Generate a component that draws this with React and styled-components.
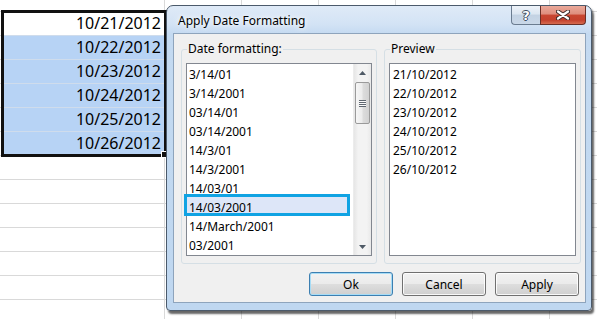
import styled, { createGlobalStyle } from "styled-components";

const GlobalStyle = createGlobalStyle`
  html, body {
    margin: 0;
    padding: 0;
    background: #fff;
    overflow: hidden;
  }
  body {
    width: 597px;
    height: 319px;
    font-family: "Noto Sans", sans-serif;
  }
`;

const dates = ["10/21/2012", "10/22/2012", "10/23/2012", "10/24/2012", "10/25/2012", "10/26/2012"];
const formats = [
  "3/14/01",
  "3/14/2001",
  "03/14/01",
  "03/14/2001",
  "14/3/01",
  "14/3/2001",
  "14/03/01",
  "14/03/2001",
  "14/March/2001",
  "03/2001",
];
const previews = ["21/10/2012", "22/10/2012", "23/10/2012", "24/10/2012", "25/10/2012", "26/10/2012"];
const ROWS = 14;
const EXTRA_COLS = 6;

function App() {
  const rows = [];
  for (let r = 0; r < ROWS; r++) {
    const value = r >= 1 && r <= 6 ? dates[r - 1] : null;
    rows.push(
      <Cell key={`e${r}`} />,
      <Cell key={`a${r}`} $selected={r >= 2 && r <= 6} $inRange={r >= 1 && r <= 6}>
        {value}
      </Cell>
    );
    for (let c = 0; c < EXTRA_COLS; c++) rows.push(<Cell key={`${r}-${c}`} />);
  }

  return (
    <Page>
      <GlobalStyle />
      <Sheet>
        {rows}
        <SelectionFrame />
      </Sheet>

      <Dialog>
        <TitleBar>
          <Title>Apply Date Formatting</Title>
          <CaptionButtons>
            <HelpButton>?</HelpButton>
            <CloseButton>
              <svg width="14" height="10" viewBox="0 0 14 10">
                <path d="M2 1.5 L12 8.5 M12 1.5 L2 8.5" stroke="#3b2a28" strokeWidth="4.2" strokeLinecap="round" />
                <path d="M2 1.5 L12 8.5 M12 1.5 L2 8.5" stroke="#fff" strokeWidth="2.2" strokeLinecap="round" />
              </svg>
            </CloseButton>
          </CaptionButtons>
        </TitleBar>

        <Client>
          <Groups>
            <Group>
              <Legend>Date formatting:</Legend>
              <ListBox>
                <Items>
                  {formats.map((f, i) => (
                    <Item key={f} $highlight={i === 7}>
                      {f}
                    </Item>
                  ))}
                </Items>
                <ScrollBar>
                  <ArrowBox>
                    <svg width="7" height="4" viewBox="0 0 7 4">
                      <path d="M3.5 0 L7 4 L0 4 Z" fill="#4f5a66" />
                    </svg>
                  </ArrowBox>
                  <Thumb>
                    <Grip />
                  </Thumb>
                  <Track />
                  <ArrowBox>
                    <svg width="7" height="4" viewBox="0 0 7 4">
                      <path d="M0 0 L7 0 L3.5 4 Z" fill="#4f5a66" />
                    </svg>
                  </ArrowBox>
                </ScrollBar>
              </ListBox>
            </Group>

            <Group>
              <Legend>Preview</Legend>
              <ListBox>
                <Items $inset={3}>
                  {previews.map((p) => (
                    <Item key={p}>{p}</Item>
                  ))}
                </Items>
              </ListBox>
            </Group>
          </Groups>

          <ButtonRow>
            <Button $default>Ok</Button>
            <Button>Cancel</Button>
            <Button>Apply</Button>
          </ButtonRow>
        </Client>
      </Dialog>
    </Page>
  );
}

const Page = styled.div`
  position: relative;
  width: 597px;
  height: 319px;
  overflow: hidden;
`;

/* spreadsheet behind the dialog */
const Sheet = styled.div`
  position: relative;
  display: grid;
  grid-template-columns: 3px 162px repeat(6, 77px);
  grid-auto-rows: 24px;
  margin-top: -12px;
`;

const Cell = styled.div`
  box-sizing: border-box;
  border-right: 1px solid #d9d9d9;
  border-bottom: 1px solid ${(p) => (p.$inRange ? "#cfdcec" : "#d9d9d9")};
  background: ${(p) => (p.$selected ? "#b7d3f5" : "#fff")};
  font-family: "Noto Sans", sans-serif;
  font-size: 16px;
  line-height: 23px;
  text-align: right;
  padding-right: 3px;
  color: #000;
  white-space: nowrap;
`;

/* thick outline of the selected range, drawn over the cells */
const SelectionFrame = styled.div`
  position: absolute;
  left: 1px;
  top: 22px;
  width: 166px;
  height: 147px;
  box-sizing: border-box;
  border: 3px solid #111;

  &::after {
    content: "";
    position: absolute;
    right: -3px;
    bottom: -3px;
    width: 5px;
    height: 5px;
    background: #111;
    outline: 1px solid #fff;
  }
`;

/* the dialog window floats over the sheet */
const Dialog = styled.div`
  position: absolute;
  left: 166px;
  top: 5px;
  width: 426px;
  height: 306px;
  box-sizing: border-box;
  display: flex;
  flex-direction: column;
  border: 1px solid #4b5a6b;
  border-radius: 7px 7px 4px 4px;
  background: linear-gradient(180deg, #dfeaf7 0px, #d3e3f5 18px, #c4daf1 28px, #bfd7f0 100%);
  box-shadow: 2px 3px 2px rgba(0, 0, 0, 0.6);
  font-family: "Noto Sans", sans-serif;
  font-size: 12px;
  color: #000;
`;

const TitleBar = styled.div`
  height: 27px;
  display: flex;
  align-items: flex-start;
  padding: 0 5px 0 11px;
`;

const Title = styled.div`
  margin-top: 7px;
  line-height: 16px;
  text-shadow: 0 0 8px #fff, 0 0 4px #fff;
`;

const CaptionButtons = styled.div`
  margin-left: auto;
  display: flex;
`;

const CaptionButton = styled.div`
  height: 19px;
  box-sizing: border-box;
  display: flex;
  align-items: center;
  justify-content: center;
  border: 1px solid #6b7c90;
  border-top: none;
`;

const HelpButton = styled(CaptionButton)`
  width: 29px;
  border-right: none;
  border-radius: 0 0 0 4px;
  background: linear-gradient(180deg, #eef3f9 0%, #dce6f1 45%, #c3d2e3 50%, #cad8e8 100%);
  color: #fff;
  font-family: "DejaVu Sans", sans-serif;
  font-weight: bold;
  font-size: 13px;
  line-height: 1;
  text-shadow: 1px 0 0 #3d4d60, -1px 0 0 #3d4d60, 0 1px 0 #3d4d60, 0 -1px 0 #3d4d60;
`;

const CloseButton = styled(CaptionButton)`
  width: 46px;
  border-color: #6a2f26;
  border-radius: 0 0 4px 0;
  background: linear-gradient(180deg, #eaa99a 0%, #de8d7d 45%, #c84631 50%, #c4412d 78%, #d66b4f 100%);
`;

const Client = styled.div`
  flex: 1;
  margin: 0 5px 7px 6px;
  box-sizing: border-box;
  border: 1px solid #8ea4bc;
  background: #f0f0f0;
  padding: 7px 4px 6px 7px;
  display: flex;
  flex-direction: column;
`;

const Groups = styled.div`
  display: grid;
  grid-template-columns: 196px 197px;
  column-gap: 7px;
`;

const Group = styled.fieldset`
  margin: 0;
  min-width: 0;
  height: 223px;
  box-sizing: border-box;
  padding: 6px 4px 7px;
  border: 1px solid #d5dfe5;
  border-radius: 3px;
  display: flex;
  flex-direction: column;
`;

const Legend = styled.legend`
  padding: 0 1px;
  margin-left: 1px;
  line-height: 16px;
  font-size: 12px;
`;

const ListBox = styled.div`
  flex: 1;
  display: flex;
  border: 1px solid #828790;
  background: #fff;
`;

const Items = styled.div`
  flex: 1;
  padding: 1px 0 0 ${(p) => p.$inset ?? 2}px;
`;

const Item = styled.div`
  position: relative;
  z-index: 0;
  height: 19px;
  line-height: 19px;
  white-space: nowrap;

  ${(p) =>
    p.$highlight &&
    `
    &::before {
      content: "";
      position: absolute;
      z-index: -1;
      left: -5px;
      right: 3px;
      top: -4px;
      bottom: 1px;
      border: 3px solid #10a3e3;
      background: #dde6f8;
    }
  `}
`;

const ScrollBar = styled.div`
  width: 17px;
  display: flex;
  flex-direction: column;
  background: linear-gradient(90deg, #e6e6e6 0%, #f3f3f3 25%, #f3f3f3 75%, #e9e9e9 100%);
  border-left: 1px solid #ececec;
`;

const ArrowBox = styled.div`
  height: 17px;
  display: flex;
  align-items: center;
  justify-content: center;
`;

const Thumb = styled.div`
  margin: 1px 1px 0;
  height: 42px;
  box-sizing: border-box;
  border: 1px solid #9a9a9a;
  border-radius: 2px;
  background: linear-gradient(90deg, #f6f6f6 0%, #ececec 45%, #dcdcdc 55%, #d2d2d2 100%);
  display: flex;
  align-items: center;
  justify-content: center;
`;

const Grip = styled.div`
  width: 7px;
  height: 7px;
  background: repeating-linear-gradient(180deg, #5f6770 0px, #5f6770 1px, #fafafa 1px, #fafafa 2px);
`;

const Track = styled.div`
  flex: 1;
`;

const ButtonRow = styled.div`
  margin-top: 8px;
  padding-right: 2px;
  display: flex;
  justify-content: flex-end;
  gap: 9px;
`;

const Button = styled.div`
  width: 84px;
  height: 24px;
  box-sizing: border-box;
  display: flex;
  align-items: center;
  justify-content: center;
  border: 1px solid ${(p) => (p.$default ? "#3c7fb1" : "#707070")};
  border-radius: 3px;
  background: linear-gradient(180deg, #f2f2f2 0%, #ebebeb 48%, #dddddd 52%, #cfcfcf 100%);
  box-shadow: inset 0 0 0 1px ${(p) => (p.$default ? "#a6dcf6" : "rgba(255, 255, 255, 0.85)")};
  font-size: 12px;
  color: #000;
`;

export default App;
